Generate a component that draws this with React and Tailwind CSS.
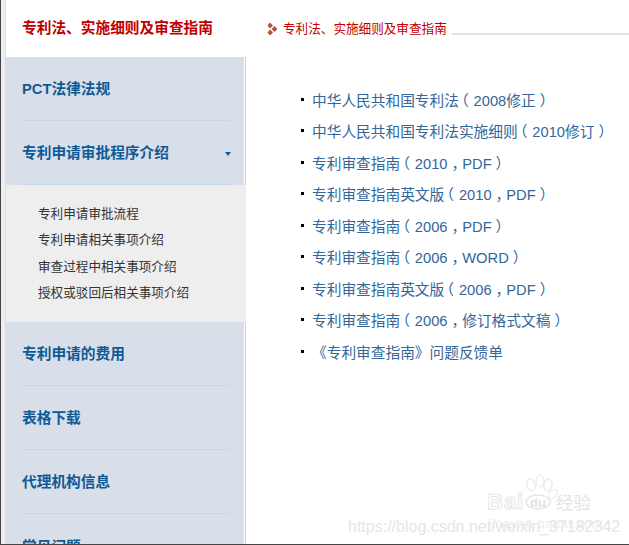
import React from 'react';

const CJK = 'font-["Liberation_Sans","Noto_Sans_CJK_SC",sans-serif]';

const subItems = ['专利申请审批流程', '专利申请相关事项介绍', '审查过程中相关事项介绍', '授权或驳回后相关事项介绍'];

const links = [
    '中华人民共和国专利法（2008修正）',
    '中华人民共和国专利法实施细则（2010修订）',
    '专利审查指南（2010，PDF）',
    '专利审查指南英文版（2010，PDF）',
    '专利审查指南（2006，PDF）',
    '专利审查指南（2006，WORD）',
    '专利审查指南英文版（2006，PDF）',
    '专利审查指南（2006，修订格式文稿）',
    '《专利审查指南》问题反馈单',
];

// reference font centres full-width punctuation in its box, the SC cut does not
const punctClass = {
    '（': 'inline-block -translate-x-[5px]',
    '）': 'inline-block translate-x-[4px]',
    '，': 'inline-block translate-x-[4px]',
};

const LinkText = ({ text }) => (
    <>
        {text.split(/([（），])/).map((part, i) =>
            i % 2 === 1
                ? <span key={i} className={punctClass[part]}>{part}</span>
                : part
        )}
    </>
);

const NavRow = ({ label, last, caret }) => (
    <div className="h-[64px] mr-[1px] pl-[16px] pr-[13px] bg-[#d8dfe9]">
        <div className={`h-full pt-[2px] flex items-center justify-between ${last ? '' : 'border-b border-[#c3d7ee]'}`}>
            <span className="text-[14.7px] font-bold text-[#0f5a96]">{label}</span>
            {caret && <span className="w-0 h-0 border-x-[3.5px] border-x-transparent border-t-[4px] border-t-[#0f5a96]"></span>}
        </div>
    </div>
);

const BaiduMark = () => (
    <div className="absolute left-[478px] top-[470px] w-[125px] h-[60px] pointer-events-none">
        <svg width="125" height="60" viewBox="0 0 125 60" fill="none" stroke="#e6e6e6" strokeWidth="1">
            <ellipse cx="53" cy="15" rx="4" ry="6" transform="rotate(-15 53 15)" />
            <ellipse cx="62" cy="11" rx="4" ry="6" />
            <ellipse cx="70" cy="15" rx="4" ry="6" transform="rotate(15 70 15)" />
            <ellipse cx="75" cy="24" rx="3.5" ry="5" transform="rotate(35 75 24)" />
            <ellipse cx="60" cy="32" rx="12" ry="7" strokeWidth="1.5" />
        </svg>
        <span className="absolute left-[9px] top-[19px] text-[22px] leading-[26px] tracking-[1px] font-['Liberation_Sans',sans-serif] font-bold text-white [-webkit-text-stroke:1px_#e6e6e6]">Bai</span>
        <span className="absolute left-[52px] top-[25px] text-[13px] leading-[15px] font-['Liberation_Sans',sans-serif] font-bold text-[#e2e2e2]">du</span>
        <span className="absolute left-[78px] top-[22px] text-[17.5px] leading-[22px] text-[#e4e4e4]">经验</span>
        <span className="absolute left-[10px] top-[47px] text-[13px] leading-[14px] tracking-[0.6px] font-['Liberation_Sans',sans-serif] text-[#ececec] whitespace-nowrap">jingyan.baidu.com</span>
    </div>
);

const App = () => {
    return (
        <div className={`${CJK} relative w-[629px] h-[545px] overflow-hidden bg-white flex flex-col`}>
            <div className="flex-1 min-h-0 overflow-hidden flex">
                <div className="w-[1px] bg-[#444444]"></div>
                <div className="w-[4px] bg-[#eceef1]"></div>

                {/* Sidebar */}
                <aside className="w-[241px] border-l border-l-[#d3dfec] border-r border-r-[#b9d3ee] bg-white">
                    <div className="h-[57px] -mr-[1px] bg-white pl-[16px] flex items-center">
                        <span className="text-[14.7px] font-bold text-[#c00000]">专利法、实施细则及审查指南</span>
                    </div>
                    <NavRow label="PCT法律法规" />
                    <NavRow label="专利申请审批程序介绍" caret />
                    <div className="h-[137px] -mr-[1px] bg-[#eeeeee] pl-[32px] pt-[16px]">
                        {subItems.map((item) => (
                            <div key={item} className="h-[26.4px] leading-[26.4px] text-[12.6px] text-[#333333]">{item}</div>
                        ))}
                    </div>
                    <NavRow label="专利申请的费用" />
                    <NavRow label="表格下载" />
                    <NavRow label="代理机构信息" />
                    <NavRow label="常见问题" last />
                </aside>

                {/* Content */}
                <main className="flex-1 min-w-0">
                    <div className="h-[38px] pl-[21px] flex items-end">
                        <svg width="12" height="14" viewBox="0 0 12 14" className="mb-[2px] shrink-0">
                            <path d="M3 0.5 L6 3.5 L3 6.5 L0.5 3.5Z M3 7.5 L6 10.5 L3 13.5 L0.5 10.5Z M7.5 4 L10.5 7 L7.5 10 L4.5 7Z" fill="#b5533c" />
                        </svg>
                        <span className="ml-[4px] text-[12.6px] leading-[18px] text-[#c00000] whitespace-nowrap">专利法、实施细则及审查指南</span>
                        <div className="ml-[5px] flex-1 h-[2px] bg-[#e2e2e2] mb-[3px]"></div>
                    </div>
                    <ul className="pl-[55px] pt-[46.9px]">
                        {links.map((link) => (
                            <li key={link} className="h-[31.5px] flex items-center whitespace-nowrap">
                                <span className="w-[3px] h-[3px] bg-black mr-[8px] -mt-[3px] shrink-0"></span>
                                <span className="text-[14.7px] text-[#336699]"><LinkText text={link} /></span>
                            </li>
                        ))}
                    </ul>
                </main>
            </div>
            <div className="h-[1px] bg-[#444444] shrink-0"></div>

            <BaiduMark />
            <div className="absolute left-[348px] top-[517px] text-[16px] leading-[20px] text-[#e6e6e6] font-['Liberation_Sans',sans-serif] whitespace-nowrap">https://blog.csdn.net/weixin_37182342</div>
        </div>
    );
};

export default App;
